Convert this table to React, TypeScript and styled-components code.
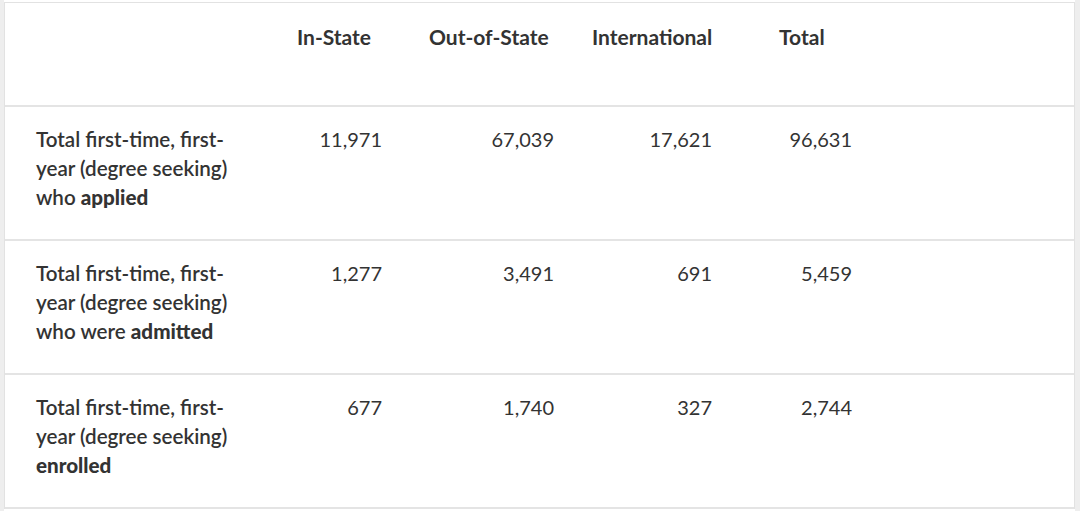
import React from "react";
import styled, { createGlobalStyle } from "styled-components";

const Global = createGlobalStyle`
  html, body { margin: 0; padding: 0; background: #ffffff; }
  body { font-family: Lato, "Open Sans", sans-serif; color: #333333; }
`;

const Page = styled.div`
  width: 1080px;
  height: 511px;
  box-sizing: border-box;
  padding: 2px 4px 0 4px;
  background: linear-gradient(to right, #eeeeee 0, #eeeeee 4px, transparent 4px, transparent 1075px, #eeeeee 1075px);
  overflow: hidden;
`;

const Table = styled.div`
  background: #fff;
  border-top: 1px solid #e2e2e2;
  border-left: 1px solid #e2e2e2;
  border-right: 1px solid #e2e2e2;
  width: 1071px;
  box-sizing: border-box;
`;

const COLS = "260px 132px 163px 187px 1fr";

const HeadRow = styled.div`
  display: grid;
  grid-template-columns: ${COLS};
  height: 104px;
  box-sizing: border-box;
  border-bottom: 2px solid #e4e4e4;
`;

const HeadCell = styled.div`
  padding: 19px 0 0 32px;
  font-size: 21px;
  font-weight: 700;
  line-height: 29px;
  color: #333;
  white-space: nowrap;
`;

const BodyRow = styled.div`
  display: grid;
  grid-template-columns: ${COLS};
  height: 134px;
  box-sizing: border-box;
  border-bottom: 2px solid #e4e4e4;
`;

const Label = styled.div`
  padding: 18px 0 0 31px;
  font-size: 20.6px;
  font-weight: 600;
  line-height: 29px;
  color: #333;
  max-width: 212px;
  strong { font-weight: 900; }
`;

const Num = styled.div<{ $pr: number }>`
  padding: 18px ${(p) => p.$pr}px 0 0;
  text-align: right;
  font-size: 20px;
  font-weight: 400;
  line-height: 29px;
  color: #333;
`;

const pads = [15, 6, 35, 222];

const headers = ["In-State", "Out-of-State", "International", "Total"];

const rows: { pre: string; strong: string; values: string[] }[] = [
  { pre: "Total first-time, first-year (degree seeking) who ", strong: "applied", values: ["11,971", "67,039", "17,621", "96,631"] },
  { pre: "Total first-time, first-year (degree seeking) who were ", strong: "admitted", values: ["1,277", "3,491", "691", "5,459"] },
  { pre: "Total first-time, first-year (degree seeking) ", strong: "enrolled", values: ["677", "1,740", "327", "2,744"] },
];

export default function App() {
  return (
    <>
      <Global />
      <Page>
        <Table>
          <HeadRow>
            <div />
            {headers.map((h) => (
              <HeadCell key={h}>{h}</HeadCell>
            ))}
          </HeadRow>
          {rows.map((r) => (
            <BodyRow key={r.strong}>
              <Label>
                {r.pre}
                <strong>{r.strong}</strong>
              </Label>
              {r.values.map((v, i) => (
                <Num key={i} $pr={pads[i]}>
                  {v}
                </Num>
              ))}
            </BodyRow>
          ))}
        </Table>
      </Page>
    </>
  );
}
